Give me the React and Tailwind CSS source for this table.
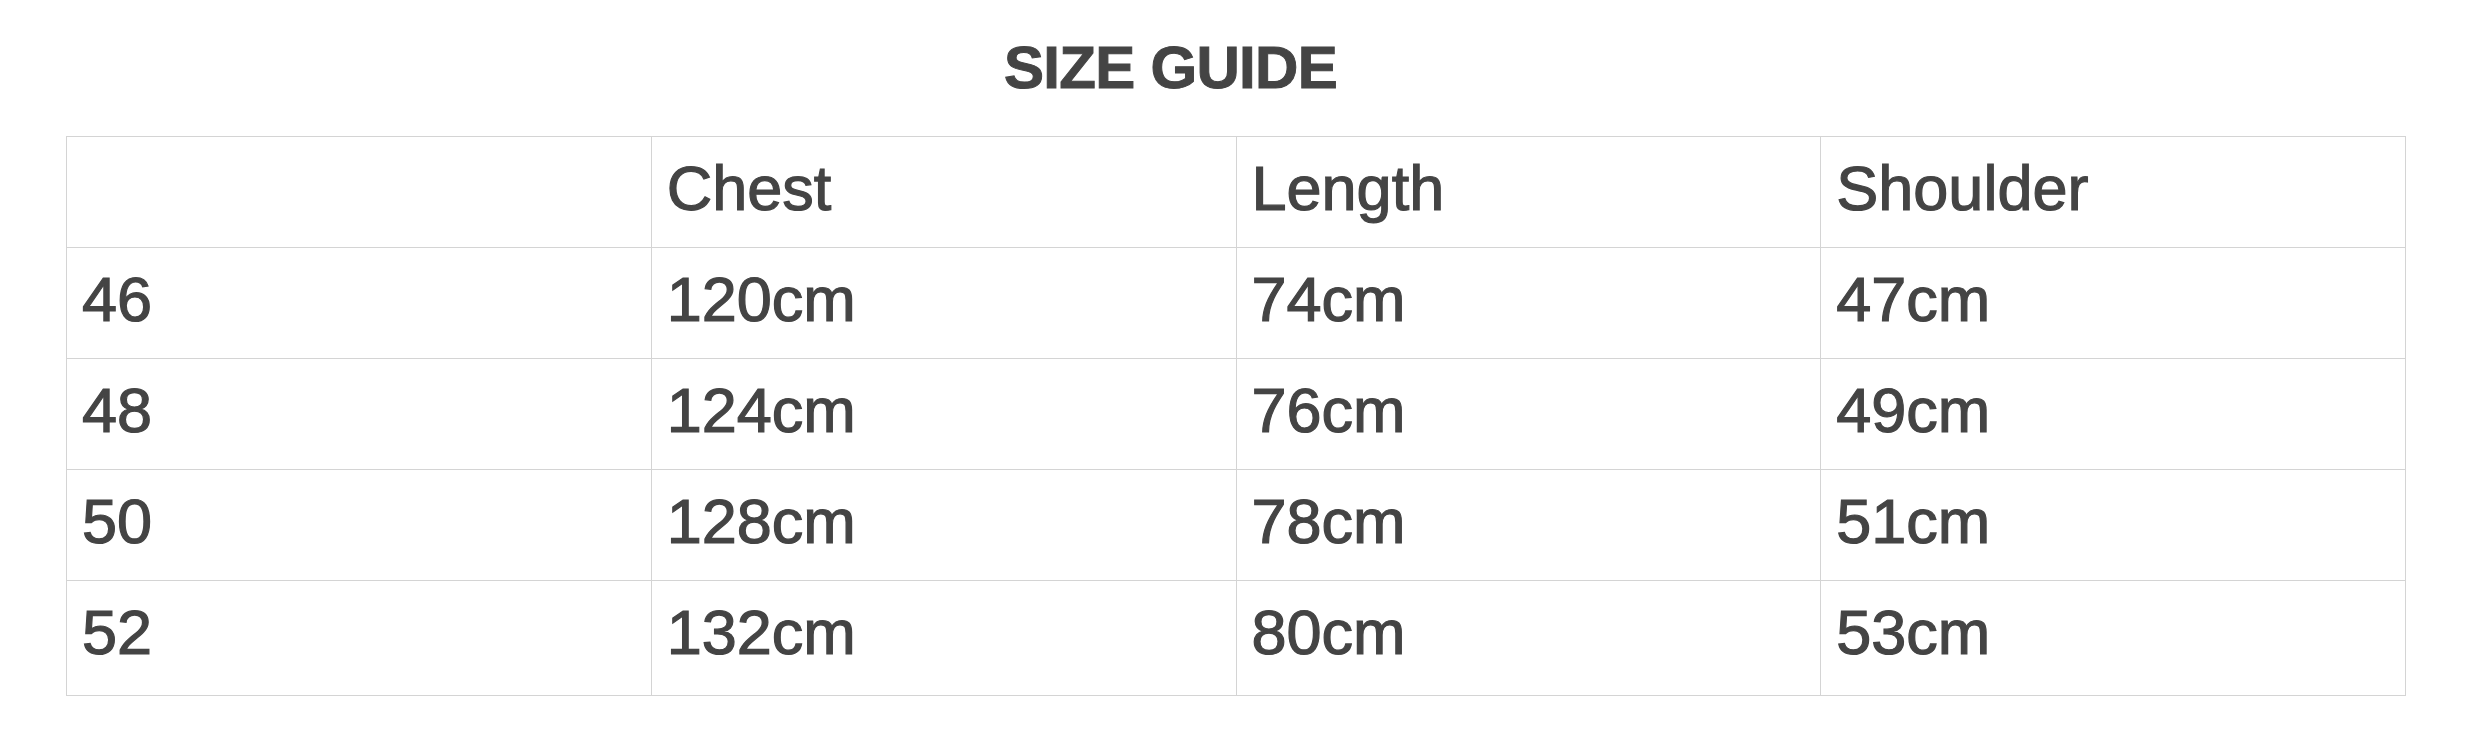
const columns = ['', 'Chest', 'Length', 'Shoulder'];

const rows = [
  ['46', '120cm', '74cm', '47cm'],
  ['48', '124cm', '76cm', '49cm'],
  ['50', '128cm', '78cm', '51cm'],
  ['52', '132cm', '80cm', '53cm'],
];

const Cell = ({ children, last }) => (
  <div
    className={`border-r border-b border-[#d4d4d4] pl-[15px] pt-[16px] text-[63px] leading-[71px] text-[#444444] [-webkit-text-stroke:1.2px_#444444] ${
      last ? 'h-[115px]' : 'h-[111px]'
    }`}
  >
    {children}
  </div>
);

const App = () => {
  return (
    <div className="w-[2472px] h-[737px] bg-white font-['Liberation_Sans',Arial,sans-serif]">
      {/* Title */}
      <div className="h-[136px] pt-[38px] flex justify-center pr-[131px]">
        <h1 className="text-[60px] leading-[60px] font-bold tracking-[-0.7px] text-[#444444] [-webkit-text-stroke:1px_#444444]">
          SIZE GUIDE
        </h1>
      </div>

      {/* Table */}
      <div className="px-[66px]">
        <div className="w-[2340px] grid grid-cols-4 border-l border-t border-[#d4d4d4]">
          {columns.map((col, i) => (
            <Cell key={`h-${i}`}>{col}</Cell>
          ))}
          {rows.map((row, r) =>
            row.map((val, c) => (
              <Cell key={`${r}-${c}`} last={r === rows.length - 1}>
                {val}
              </Cell>
            ))
          )}
        </div>
      </div>
    </div>
  );
};

export default App;
